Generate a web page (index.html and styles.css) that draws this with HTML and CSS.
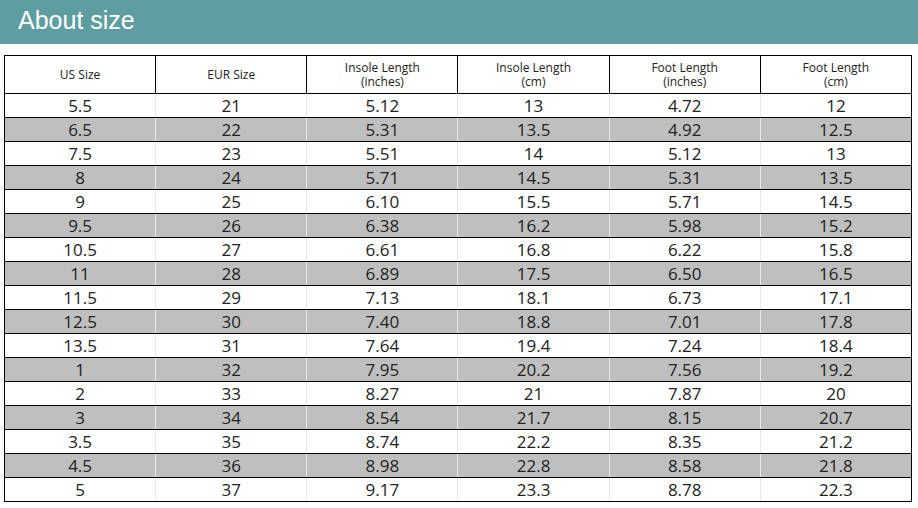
FILE: index.html
```html
<!DOCTYPE html>
<html>
<head>
<meta charset="utf-8">
<link rel="stylesheet" href="styles.css">
</head>
<body>
<div class="band"><h1 class="title">About size</h1></div>
<table class="sizes">
<thead>
<tr><th>US Size</th><th>EUR Size</th><th>Insole Length<br>(inches)</th><th>Insole Length<br>(cm)</th><th>Foot Length<br>(inches)</th><th>Foot Length<br>(cm)</th></tr>
</thead>
<tbody>
<tr><td>5.5</td><td>21</td><td>5.12</td><td>13</td><td>4.72</td><td>12</td></tr>
<tr class="alt"><td>6.5</td><td>22</td><td>5.31</td><td>13.5</td><td>4.92</td><td>12.5</td></tr>
<tr><td>7.5</td><td>23</td><td>5.51</td><td>14</td><td>5.12</td><td>13</td></tr>
<tr class="alt"><td>8</td><td>24</td><td>5.71</td><td>14.5</td><td>5.31</td><td>13.5</td></tr>
<tr><td>9</td><td>25</td><td>6.10</td><td>15.5</td><td>5.71</td><td>14.5</td></tr>
<tr class="alt"><td>9.5</td><td>26</td><td>6.38</td><td>16.2</td><td>5.98</td><td>15.2</td></tr>
<tr><td>10.5</td><td>27</td><td>6.61</td><td>16.8</td><td>6.22</td><td>15.8</td></tr>
<tr class="alt"><td>11</td><td>28</td><td>6.89</td><td>17.5</td><td>6.50</td><td>16.5</td></tr>
<tr><td>11.5</td><td>29</td><td>7.13</td><td>18.1</td><td>6.73</td><td>17.1</td></tr>
<tr class="alt"><td>12.5</td><td>30</td><td>7.40</td><td>18.8</td><td>7.01</td><td>17.8</td></tr>
<tr><td>13.5</td><td>31</td><td>7.64</td><td>19.4</td><td>7.24</td><td>18.4</td></tr>
<tr class="alt"><td>1</td><td>32</td><td>7.95</td><td>20.2</td><td>7.56</td><td>19.2</td></tr>
<tr><td>2</td><td>33</td><td>8.27</td><td>21</td><td>7.87</td><td>20</td></tr>
<tr class="alt"><td>3</td><td>34</td><td>8.54</td><td>21.7</td><td>8.15</td><td>20.7</td></tr>
<tr><td>3.5</td><td>35</td><td>8.74</td><td>22.2</td><td>8.35</td><td>21.2</td></tr>
<tr class="alt"><td>4.5</td><td>36</td><td>8.98</td><td>22.8</td><td>8.58</td><td>21.8</td></tr>
<tr><td>5</td><td>37</td><td>9.17</td><td>23.3</td><td>8.78</td><td>22.3</td></tr>
</tbody>
</table>
</body>
</html>
```
FILE: styles.css
```css
html, body {
  margin: 0;
  padding: 0;
  background: #ffffff;
}
.band {
  background: #5f9ea0;
  height: 44px;
  display: flex;
  align-items: center;
  padding-left: 18px;
}
.title {
  margin: 0;
  font-family: "Liberation Sans", Arial, sans-serif;
  font-weight: normal;
  font-size: 25px;
  color: #ffffff;
  line-height: 1;
  position: relative;
  top: -2px;
}
.sizes {
  margin: 11px 0 0 4px;
  width: 908px;
  border-collapse: collapse;
  table-layout: fixed;
  font-family: "Open Sans", sans-serif;
  color: #222222;
  border: 1px solid #000000;
}
.sizes th {
  font-weight: normal;
  font-size: 12px;
  line-height: 14px;
  height: 37px;
  padding: 0;
  border: 1px solid #000000;
  vertical-align: middle;
  text-align: center;
}
.sizes td {
  font-size: 17px;
  line-height: 20px;
  height: 23px;
  padding: 0;
  text-align: center;
  vertical-align: middle;
  border-top: 1px solid #000000;
  border-bottom: 1px solid #000000;
  border-left: 1px solid #e6e6e6;
  border-right: 1px solid #e6e6e6;
}
.sizes td:first-child {
  border-left: 1px solid #000000;
}
.sizes td:last-child {
  border-right: 1px solid #000000;
}
.sizes tr.alt td {
  background: #bfbfbf;
}
```
